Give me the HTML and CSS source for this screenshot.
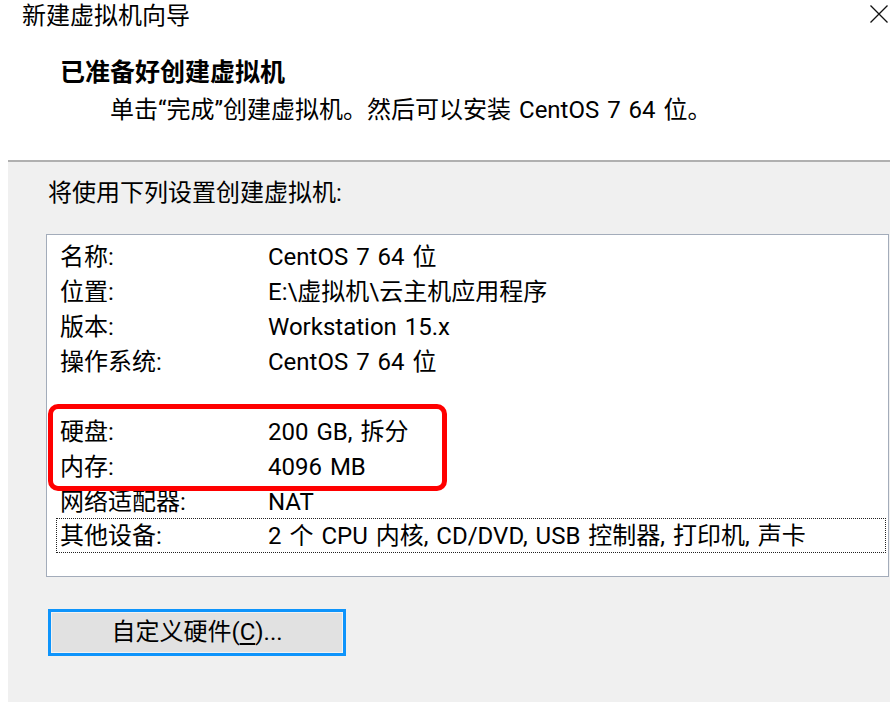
FILE: index.html
```html
<!DOCTYPE html>
<html lang="zh-CN">
<head>
<meta charset="utf-8">
<title>新建虚拟机向导</title>
<link rel="stylesheet" href="styles.css">
</head>
<body>
<div class="dialog">
  <header class="top">
    <div class="titlebar">
      <span class="title">新建虚拟机向导</span>
      <svg class="close" width="18" height="18" viewBox="0 0 18 18" aria-label="关闭">
        <path d="M0.5 0.5 L17.5 17.5 M17.5 0.5 L0.5 17.5" stroke="#111" stroke-width="1.3" fill="none"/>
      </svg>
    </div>
    <h1 class="heading">已准备好创建虚拟机</h1>
    <p class="subtitle">单击“完成”创建虚拟机。然后可以安装 CentOS 7 64 位。</p>
  </header>
  <main class="panel">
    <p class="intro">将使用下列设置创建虚拟机:</p>
    <div class="listbox">
      <div class="row"><span class="label">名称:</span><span class="value">CentOS 7 64 位</span></div>
      <div class="row"><span class="label">位置:</span><span class="value">E:\虚拟机\云主机应用程序</span></div>
      <div class="row"><span class="label">版本:</span><span class="value">Workstation 15.x</span></div>
      <div class="row"><span class="label">操作系统:</span><span class="value">CentOS 7 64 位</span></div>
      <div class="row"></div>
      <div class="row"><span class="label">硬盘:</span><span class="value">200 GB, 拆分</span></div>
      <div class="row"><span class="label">内存:</span><span class="value">4096 MB</span></div>
      <div class="row"><span class="label">网络适配器:</span><span class="value">NAT</span></div>
      <div class="row focus"><span class="label">其他设备:</span><span class="value">2 个 CPU 内核, CD/DVD, USB 控制器, 打印机, 声卡</span></div>
      <div class="highlight"></div>
    </div>
    <button class="btn" type="button">自定义硬件(<u>C</u>)...</button>
  </main>
</div>
</body>
</html>
```

FILE: styles.css
```css
* { box-sizing: border-box; }

html, body {
  margin: 0;
  padding: 0;
  background: #ffffff;
}

body {
  font-family: "Roboto", "Noto Sans CJK SC", sans-serif;
  font-size: 24px;
  color: #000;
}

.dialog {
  width: 890px;
  height: 702px;
  display: flex;
  flex-direction: column;
  overflow: hidden;
}

.top {
  height: 160px;
  flex: none;
}

.titlebar {
  display: flex;
  justify-content: space-between;
  align-items: flex-start;
  padding: 0 2px 0 22px;
  height: 32px;
}

.title {
  line-height: 32px;
}

.close {
  margin-top: 5px;
}

.heading {
  margin: 25px 0 0 60px;
  font-size: 25px;
  font-weight: bold;
  line-height: 32px;
}

.subtitle {
  margin: 5px 0 0 110px;
  line-height: 32px;
  word-spacing: 2px;
}

.panel {
  flex: 1;
  margin-left: 8px;
  background: #f0f0f0;
  border-top: 2px solid #b0b0b0;
  padding: 15px 1px 0 38px;
}

.intro {
  margin: 0 0 25px 2px;
  line-height: 32px;
}

.listbox {
  position: relative;
  height: 343px;
  background: #fff;
  border: 1px solid #a3acba;
  padding-top: 5px;
}

.row {
  display: grid;
  grid-template-columns: 208px 1fr;
  height: 35px;
  line-height: 35px;
  margin: 0 2px 0 9px;
  padding-left: 4px;
  white-space: nowrap;
}

.value {
  word-spacing: 2px;
}

.row.focus {
  margin-top: -2px;
  border: 1px dotted #222;
  padding-left: 3px;
  line-height: 35px;
}

.highlight {
  position: absolute;
  left: 1px;
  top: 169px;
  width: 399px;
  height: 87px;
  border: 5px solid #ff0000;
  border-radius: 10px;
}

.btn {
  display: block;
  margin: 32px 0 0 2px;
  width: 298px;
  height: 47px;
  background: #e1e1e1;
  border: 3px solid #0e94fb;
  box-shadow: inset 0 0 0 1px #f2f2f2;
  font: inherit;
  color: #000;
  padding: 0;
  line-height: 41px;
}

.btn u {
  text-underline-offset: 3px;
}
```
